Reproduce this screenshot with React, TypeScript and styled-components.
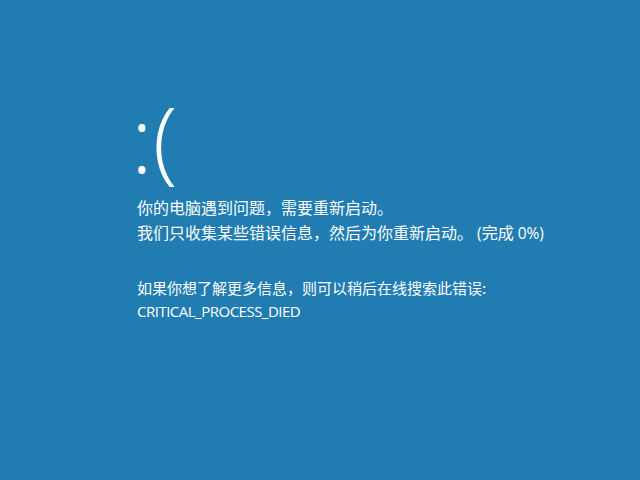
import React from "react";
import styled, { createGlobalStyle } from "styled-components";

const Global = createGlobalStyle`
  html, body { margin: 0; padding: 0; background: #217db1; }
  body { font-family: "Open Sans", "Noto Sans CJK SC", sans-serif; color: #fff; }
`;

const Screen = styled.div`
  width: 640px;
  height: 480px;
  background: #217db1;
  box-sizing: border-box;
  padding: 93px 0 0 137px;
  display: flex;
  flex-direction: column;
`;

const Face = styled.div`
  font-family: "Open Sans", sans-serif;
  font-weight: 300;
  font-size: 91px;
  line-height: 91px;
  height: 91px;
  margin-left: -6px;
  margin-bottom: 11px;
`;

const Block = styled.div<{ $gap?: number }>`
  display: flex;
  flex-direction: column;
  margin-top: ${(p) => p.$gap ?? 0}px;
`;

const Line = styled.div<{ $size: number; $lh: number }>`
  font-family: "Noto Sans CJK SC", sans-serif;
  font-size: ${(p) => p.$size}px;
  line-height: ${(p) => p.$lh}px;
  white-space: nowrap;
`;

const Latin = styled.span`
  font-family: "Open Sans", sans-serif;
  font-size: 15.5px;
`;

const Code = styled.span`
  font-family: "Open Sans", sans-serif;
  font-size: 15px;
  letter-spacing: -0.5px;
`;

export default function App() {
  return (
    <>
      <Global />
      <Screen>
        <Face>:(</Face>
        <Block>
          <Line $size={16} $lh={25}>你的电脑遇到问题，需要重新启动。</Line>
          <Line $size={16} $lh={25}>
            我们只收集某些错误信息，然后为你重新启动。<Latin> (</Latin>完成<Latin> 0%)</Latin>
          </Line>
        </Block>
        <Block $gap={30}>
          <Line $size={15} $lh={23}>如果你想了解更多信息，则可以稍后在线搜索此错误:</Line>
          <Line $size={15} $lh={23}>
            <Code>CRITICAL_PROCESS_DIED</Code>
          </Line>
        </Block>
      </Screen>
    </>
  );
}
